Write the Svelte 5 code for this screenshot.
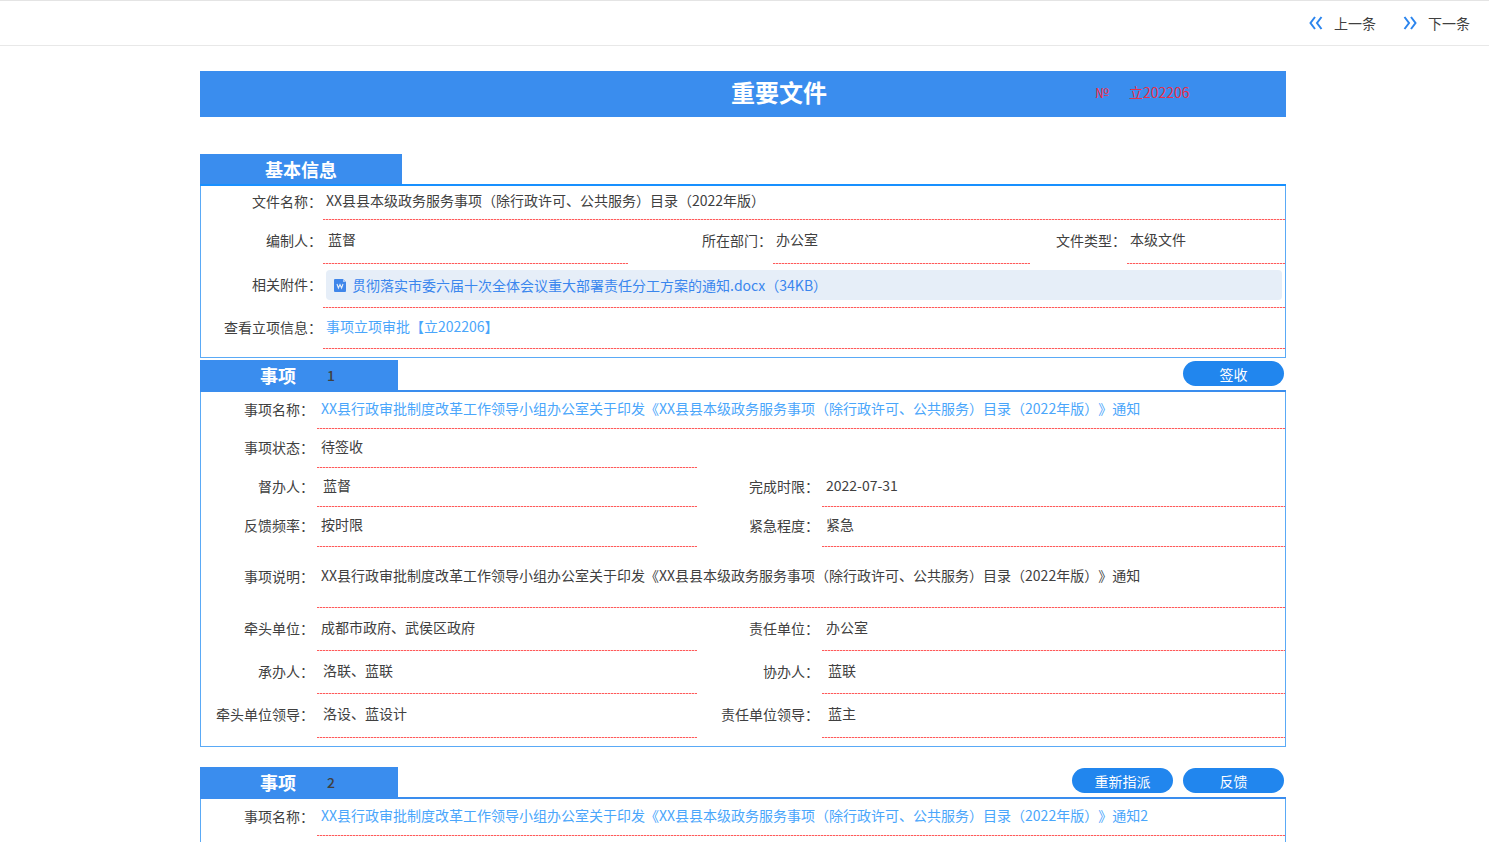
<script lang="ts">
  type Field = { label: string; value: string; kind?: 'link' | 'file' | 'person'; half?: boolean };
  type Row = { height: string; fields: Field[] };

  const basicRows: Row[] = [
    { height: 'h34', fields: [{ label: '文件名称', value: 'XX县县本级政务服务事项（除行政许可、公共服务）目录（2022年版）' }] },
    {
      height: 'h44',
      fields: [
        { label: '编制人', value: '蓝督', kind: 'person' },
        { label: '所在部门', value: '办公室' },
        { label: '文件类型', value: '本级文件' }
      ]
    },
    { height: 'h44', fields: [{ label: '相关附件', value: '贯彻落实市委六届十次全体会议重大部署责任分工方案的通知.docx（34KB）', kind: 'file' }] },
    { height: 'h41', fields: [{ label: '查看立项信息', value: '事项立项审批【立202206】', kind: 'link' }] }
  ];

  const notice = 'XX县行政审批制度改革工作领导小组办公室关于印发《XX县县本级政务服务事项（除行政许可、公共服务）目录（2022年版）》通知';

  const matters: { no: number; actions: string[]; rows: Row[] }[] = [
    {
      no: 1,
      actions: ['签收'],
      rows: [
        { height: 'h37', fields: [{ label: '事项名称', value: notice, kind: 'link' }] },
        { height: 'h39', fields: [{ label: '事项状态', value: '待签收', half: true }] },
        {
          height: 'h39',
          fields: [
            { label: '督办人', value: '蓝督', kind: 'person' },
            { label: '完成时限', value: '2022-07-31' }
          ]
        },
        {
          height: 'h40',
          fields: [
            { label: '反馈频率', value: '按时限' },
            { label: '紧急程度', value: '紧急' }
          ]
        },
        { height: 'h61', fields: [{ label: '事项说明', value: notice }] },
        {
          height: 'h43',
          fields: [
            { label: '牵头单位', value: '成都市政府、武侯区政府' },
            { label: '责任单位', value: '办公室' }
          ]
        },
        {
          height: 'h43',
          fields: [
            { label: '承办人', value: '洛联、蓝联', kind: 'person' },
            { label: '协办人', value: '蓝联', kind: 'person' }
          ]
        },
        {
          height: 'h44',
          fields: [
            { label: '牵头单位领导', value: '洛设、蓝设计', kind: 'person' },
            { label: '责任单位领导', value: '蓝主', kind: 'person' }
          ]
        }
      ]
    },
    {
      no: 2,
      actions: ['重新指派', '反馈'],
      rows: [{ height: 'h37', fields: [{ label: '事项名称', value: notice + '2', kind: 'link' }] }]
    }
  ];
</script>

{#snippet row(r: Row)}
  <div class="row {r.height}">
    {#each r.fields as f}
      <dt>{f.label}：</dt>
      <dd class:wide={r.fields.length === 1 && !f.half} class:person={f.kind === 'person'} class:attach={f.kind === 'file'}>
        {#if f.kind === 'file'}
          <a class="file" href="#file">
            <svg width="12" height="13" viewBox="0 0 12 13" aria-hidden="true">
              <path d="M1 0h8l3 3v9a1 1 0 0 1-1 1H1a1 1 0 0 1-1-1V1a1 1 0 0 1 1-1z" fill="#3f86ea" />
              <path d="M9 0v3h3z" fill="#a9c9f6" />
              <path d="M3 5l1.400 4L6 5.500 7.600 9 9 5" fill="none" stroke="#e6eef8" stroke-width="1.100" />
            </svg>
            {f.value}
          </a>
        {:else if f.kind === 'link'}
          <a class="link" href="#detail">{f.value}</a>
        {:else}
          {f.value}
        {/if}
      </dd>
    {/each}
  </div>
{/snippet}

<div class="page">
  <nav class="topbar">
    <button class="step">
      <svg width="14" height="14" viewBox="0 0 14 14" aria-hidden="true"><path d="M6 1L1.500 7 6 13M12.500 1L8 7l4.500 6" /></svg>
      上一条
    </button>
    <button class="step">
      <svg width="14" height="14" viewBox="0 0 14 14" aria-hidden="true"><path d="M1.500 1L6 7l-4.500 6M8 1l4.500 6L8 13" /></svg>
      下一条
    </button>
  </nav>

  <main>
    <header class="banner">
      <h1>重要文件</h1>
      <div class="serial"><span>№</span><span>立202206</span></div>
    </header>

    <section class="basic">
      <div class="head"><h2>基本信息</h2></div>
      <dl>
        {#each basicRows as r}
          {@render row(r)}
        {/each}
      </dl>
    </section>

    {#each matters as m}
      <section class="matter">
        <div class="head">
          <h2>事项<span class="no">{m.no}</span></h2>
          <div class="actions">
            {#each m.actions as action}
              <button>{action}</button>
            {/each}
          </div>
        </div>
        <dl>
          {#each m.rows as r}
            {@render row(r)}
          {/each}
        </dl>
      </section>
    {/each}
  </main>
</div>

<style>
:global(body) { margin: 0; background: #fff; }
.page { box-sizing: border-box; min-height: 100vh; display: flex; flex-direction: column; font-family: "Noto Sans CJK SC", sans-serif; font-size: 14px; line-height: 20px; color: #404040; text-spacing-trim: space-all; }
button { font: inherit; border: 0; padding: 0; cursor: pointer; }
a { text-decoration: none; }
h1, h2, dl, dd { margin: 0; }

.topbar { display: flex; justify-content: flex-end; gap: 27px; height: 44px; padding-right: 19px; border-top: 1px solid #e4e4e4; border-bottom: 1px solid #e8e8e8; }
.step { display: flex; align-items: center; gap: 11px; background: none; color: #404040; }
.step svg { fill: none; stroke: #2b85ee; stroke-width: 2; }

main { flex: 1; display: flex; flex-direction: column; padding: 25px 203px 0 200px; }
.banner { display: grid; grid-template-columns: 263px 1fr 191px; align-items: center; height: 42px; padding-bottom: 4px; background: #3a8dee; }
.banner h1 { grid-column: 2; text-align: center; font-size: 24px; line-height: 32px; color: #fff; }
.serial { display: flex; gap: 20px; color: #e8304a; }

section { --line: #3a8dee; }
.basic { --line: #1890ff; margin-top: 37px; }
.matter { margin-top: 20px; }
.basic + .matter { margin-top: 2px; }
.matter:last-child { flex: 1; display: flex; flex-direction: column; }
.head { display: flex; justify-content: space-between; align-items: center; border-bottom: 2px solid var(--line); }
.head h2 { box-sizing: border-box; width: 202px; text-align: center; font-size: 18px; line-height: 30px; color: #fff; background: #3a8dee; }
.matter h2 { display: flex; align-items: center; width: 198px; padding-left: 60px; }
.no { margin-left: 31px; font-size: 14px; font-weight: 500; color: #404040; }
.actions { display: flex; gap: 10px; padding: 0 2px 3px 0; }
.actions button { width: 101px; height: 25px; border-radius: 13px; background: #2186ee; color: #fff; }

dl { border: 1px solid #5aaaf6; border-top: 0; padding-bottom: 8px; }
.matter:last-child dl { flex: 1; border-bottom: 0; padding-bottom: 0; }
.row { display: grid; }
.basic .row { grid-template-columns: 122px 305fr 145px 257fr 97px 158fr; }
.matter .row { grid-template-columns: 116px 380fr 125px 463fr; }
.h34 { height: 34px; }
.h37 { height: 37px; }
.h39 { height: 39px; }
.h40 { height: 40px; }
.h41 { height: 41px; }
.h43 { height: 43px; }
.h44 { height: 44px; }
.h61 { height: 61px; }
dt { display: flex; align-items: center; justify-content: flex-end; padding: 0 1px 4px 0; white-space: nowrap; }
.matter dt { padding-right: 3px; }
/* fine dashes: tighter than a dashed border draws them */
dd { display: flex; align-items: center; padding: 0 4px 6px; background: repeating-linear-gradient(90deg, #ff5a5a 0 2px, #ffc4c4 2px 3px) bottom / 100% 1px no-repeat; white-space: nowrap; }
.basic dd { padding-left: 3px; }
.basic dd.person { padding-left: 5px; }
.matter dd.person { padding-left: 6px; }
.basic dd.attach { padding: 0 3px 2px; }
dd.wide { grid-column: 2 / -1; }
.link { color: #4aa6fb; }
.file { flex: 1; display: flex; align-items: center; gap: 6px; height: 30px; padding-left: 8px; border-radius: 4px; background: #e6eef8; color: #3a86ee; }
</style>
